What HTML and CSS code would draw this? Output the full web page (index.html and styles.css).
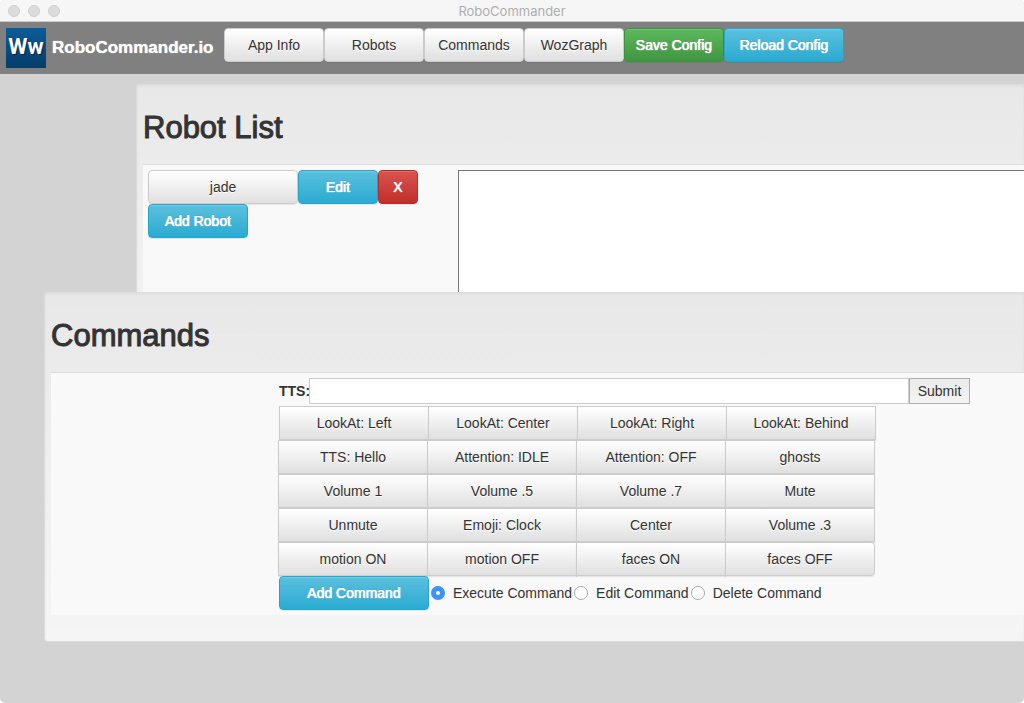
FILE: index.html
```html
<!DOCTYPE html>
<html lang="en">
<head>
<meta charset="utf-8">
<title>RoboCommander</title>
<link rel="stylesheet" href="styles.css">
</head>
<body>
<div class="window">
  <header class="titlebar">
    <div class="lights"><span class="light"></span><span class="light"></span><span class="light"></span></div>
    <div class="title">RoboCommander</div>
  </header>
  <nav class="navbar">
    <span class="logo">Ww</span>
    <a class="brand" href="#">RoboCommander.io</a>
    <button class="btn nav-btn">App Info</button>
    <button class="btn nav-btn">Robots</button>
    <button class="btn nav-btn">Commands</button>
    <button class="btn nav-btn">WozGraph</button>
    <button class="btn nav-btn success">Save Config</button>
    <button class="btn nav-btn info wide">Reload Config</button>
  </nav>
  <main class="stage">
    <section class="panel robots">
      <h1 class="heading">Robot List</h1>
      <div class="content robots-content">
        <div class="robot-list">
          <div class="row">
            <button class="btn large">jade</button>
            <button class="btn medium info">Edit</button>
            <button class="btn small danger">X</button>
          </div>
          <button class="btn nav-btn info">Add Robot</button>
        </div>
        <textarea class="log" aria-label="Robot log"></textarea>
      </div>
    </section>
    <section class="panel commands">
      <h1 class="heading">Commands</h1>
      <div class="content commands-content">
        <form class="row tts">
          <label class="tts-label" for="tts">TTS:</label>
          <input class="tts-input" id="tts" type="text">
          <button class="submit" type="button">Submit</button>
        </form>
        <div class="grid">
          <button class="btn large">LookAt: Left</button>
          <button class="btn large">LookAt: Center</button>
          <button class="btn large">LookAt: Right</button>
          <button class="btn large">LookAt: Behind</button>
          <button class="btn large">TTS: Hello</button>
          <button class="btn large">Attention: IDLE</button>
          <button class="btn large">Attention: OFF</button>
          <button class="btn large">ghosts</button>
          <button class="btn large">Volume 1</button>
          <button class="btn large">Volume .5</button>
          <button class="btn large">Volume .7</button>
          <button class="btn large">Mute</button>
          <button class="btn large">Unmute</button>
          <button class="btn large">Emoji: Clock</button>
          <button class="btn large">Center</button>
          <button class="btn large">Volume .3</button>
          <button class="btn large">motion ON</button>
          <button class="btn large">motion OFF</button>
          <button class="btn large">faces ON</button>
          <button class="btn large">faces OFF</button>
        </div>
        <div class="row modes">
          <button class="btn large info">Add Command</button>
          <label class="mode"><input class="radio" type="radio" name="mode" checked>Execute Command</label>
          <label class="mode"><input class="radio" type="radio" name="mode">Edit Command</label>
          <label class="mode"><input class="radio" type="radio" name="mode">Delete Command</label>
        </div>
      </div>
    </section>
  </main>
</div>
</body>
</html>
```
FILE: styles.css
```css
* { box-sizing: border-box; }

html { background: #fff; }

body {
  margin: 0;
  font: 14px/20px "Liberation Sans", Arial, sans-serif;
  color: #333;
}

.window {
  display: flex;
  flex-direction: column;
  min-height: 100vh;
  overflow: hidden;
  border-radius: 5px;
  background: #d3d3d3;
}

.titlebar {
  display: grid;
  grid-template-columns: 1fr auto 1fr;
  align-items: center;
  height: 22px;
  padding: 0 8px;
  border-bottom: 1px solid #cbcbcb;
  background: #f6f6f6;
}

.lights { display: flex; gap: 8px; }

.light {
  width: 12px;
  height: 12px;
  border: 1px solid #cecece;
  border-radius: 50%;
  background: #dcdcdc;
}

.title {
  font: 13px/20px Inter, sans-serif;
  color: #aeaeae;
}

.navbar {
  display: flex;
  align-items: flex-start;
  padding: 6px;
  background: #808080;
}

.logo {
  width: 40px;
  height: 40px;
  background: linear-gradient(#0d5c98, #043d68);
  color: #fff;
  font: bold 22px/38px Roboto, sans-serif;
  text-align: center;
  text-shadow: 1px 1px 1px #021e50;
}

.brand {
  width: 178px;
  padding-left: 6px;
  color: #fff;
  font-size: 17px;
  font-weight: bold;
  line-height: 40px;
  text-decoration: none;
  text-shadow: 0 0 1px #fff;
}

.btn {
  height: 34px;
  padding: 6px 0;
  border: 1px solid #ccc;
  border-radius: 4px;
  background: linear-gradient(#fff, #e0e0e0);
  box-shadow: inset 0 1px 0 rgba(255, 255, 255, .15), 0 1px 1px rgba(0, 0, 0, .08);
  color: #333;
  font: inherit;
  text-shadow: 0 1px 0 #fff;
}

.nav-btn { width: 100px; }
.wide { width: 120px; }
.large { width: 150px; }
.medium { width: 80px; }
.small { width: 40px; }

.success, .info, .danger {
  color: #fff;
  text-shadow: 0 0 1px #fff, 0 0 1px #fff, 0 -1px 0 rgba(0, 0, 0, .2);
}

.success { border-color: #3e8f3e; background: linear-gradient(#5cb85c, #419641); }
.info { border-color: #28a4c9; background: linear-gradient(#5bc0de, #2aabd2); }
.danger { border-color: #b92c28; background: linear-gradient(#d9534f, #c12e2a); }

.stage { padding-top: 10px; }

.panel {
  padding: 0 0 26px 6px;
  border: 1px solid #dcdcdc;
  border-right: 0;
  border-radius: 4px 0 0 4px;
  background: linear-gradient(#e8e8e8, #f5f5f5);
  box-shadow: inset 0 1px 3px rgba(0, 0, 0, .05);
}

.robots { margin-left: 136px; }

/* Panels stack like windows: the commands panel covers the lower robots panel. */
.commands {
  position: relative;
  margin: -94px 0 0 44px;
}

.heading {
  margin: 0;
  padding: 23px 0 16px;
  font-size: 31px;
  font-weight: normal;
  line-height: 40px;
  -webkit-text-stroke: 1px #333;
}

.content {
  border-top: 1px solid #ddd;
  background: #f9f9f9;
}

.robots-content {
  display: flex;
  padding: 5px 0 5px 5px;
}

.robot-list { width: 310px; }

.row { display: flex; }

.log {
  flex: 1;
  height: 184px;
  border: 1px solid #767676;
  border-right: 0;
  background: #fff;
  resize: none;
}

.commands-content { padding: 5px 0 5px 228px; }

.tts {
  align-items: center;
  padding-bottom: 2px;
}

.tts-label {
  width: 30px;
  font-weight: bold;
}

.tts-input {
  width: 600px;
  height: 26px;
  border: 1px solid #ccc;
  background: #fff;
  font: inherit;
}

.submit {
  width: 61px;
  height: 26px;
  padding: 0;
  border: 1px solid #adadad;
  background: linear-gradient(#eaeaea, #f4f4f4);
  color: #333;
  font: inherit;
}

.grid {
  display: flex;
  flex-wrap: wrap;
  width: 600px;
}

.grid .btn { border-radius: 0; }
.grid .btn + .btn { margin-left: -1px; }
.grid .btn:last-child { border-radius: 0 4px 4px 0; }

.modes { align-items: center; }

.mode {
  display: flex;
  align-items: center;
}

.radio {
  width: 14px;
  height: 14px;
  margin: 0 8px 0 2px;
  appearance: none;
  border: 1px solid #ababab;
  border-radius: 50%;
  background: #fff;
}

.radio:checked {
  border: 5px solid #3b93fb;
}
```
